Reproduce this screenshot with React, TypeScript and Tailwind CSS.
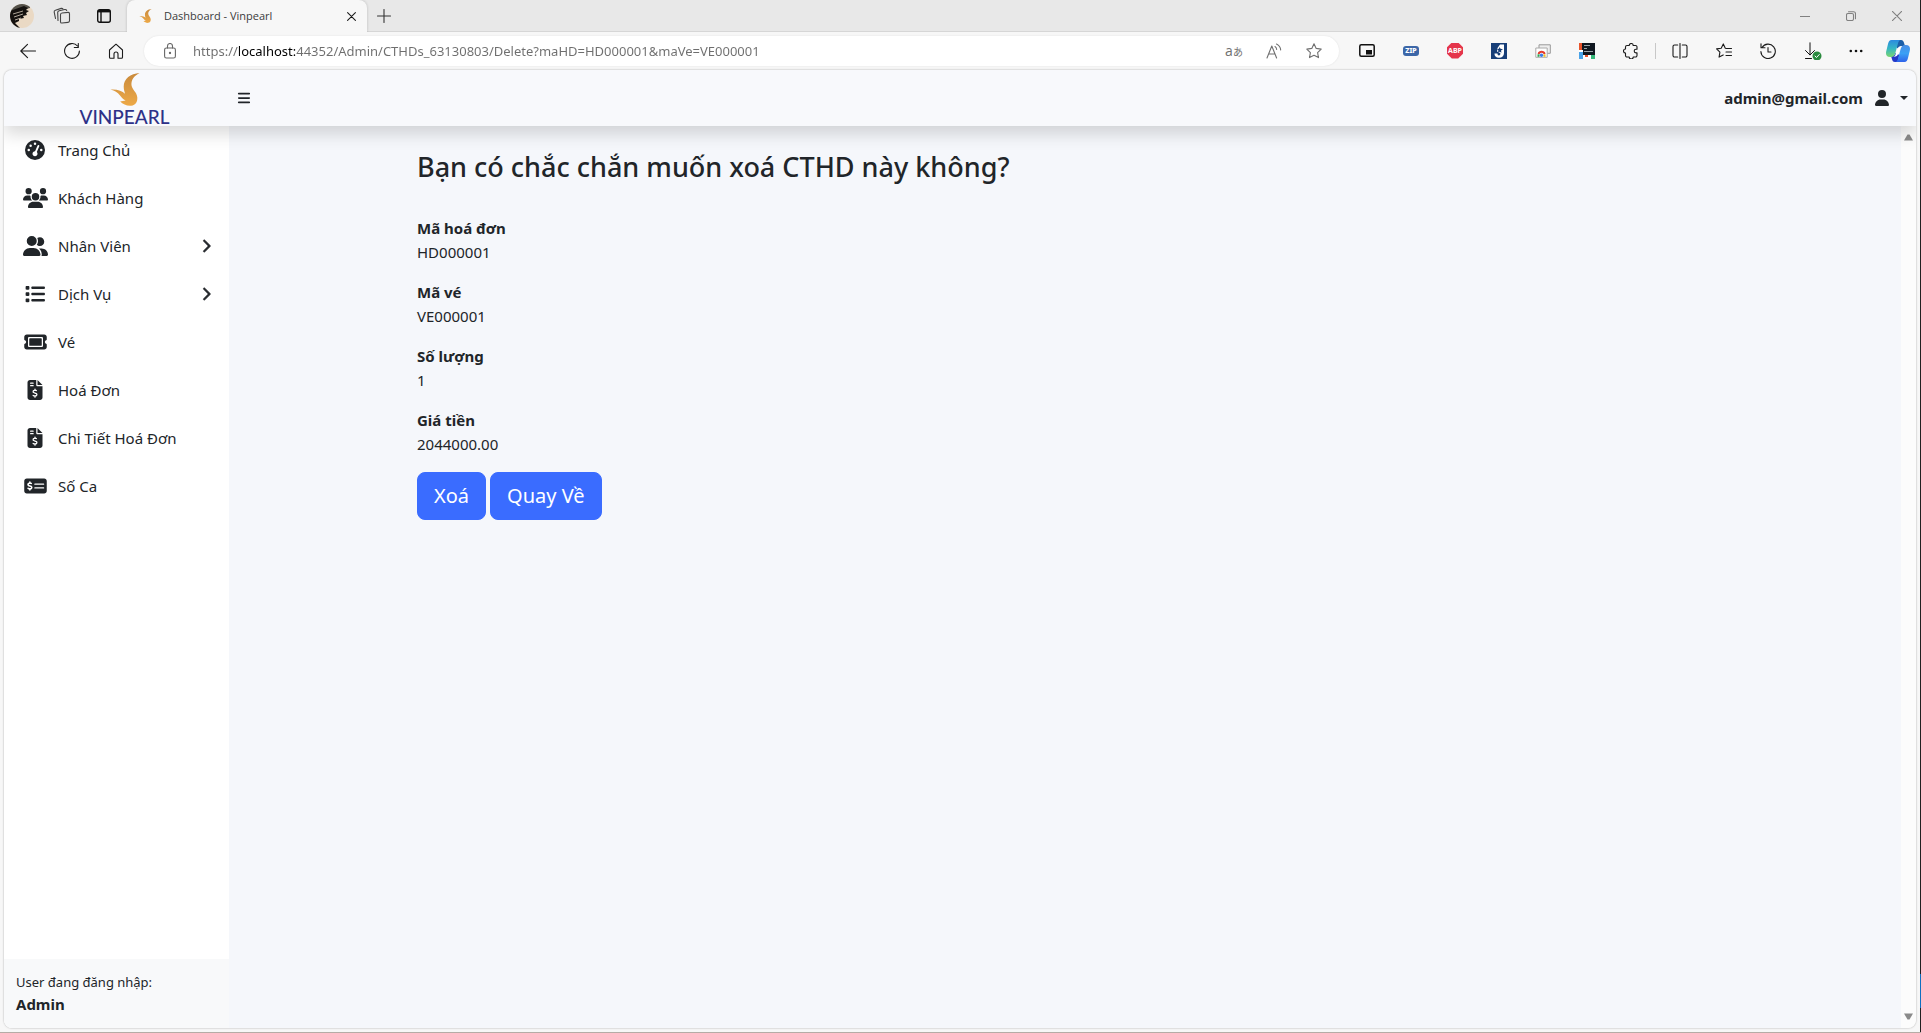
import React from "react";
import {
  FaBars,
  FaChevronRight,
  FaFileInvoiceDollar,
  FaGaugeHigh,
  FaList,
  FaMoneyCheckDollar,
  FaTicket,
  FaUser,
  FaUserGroup,
  FaUsers,
} from "react-icons/fa6";

type SvgProps = { children: React.ReactNode; box?: string; className?: string };

function Line({ children, box = "0 0 20 20", className = "size-5" }: SvgProps) {
  return (
    <svg
      viewBox={box}
      className={className}
      fill="none"
      stroke="currentColor"
      strokeWidth="1.1"
      strokeLinecap="round"
      strokeLinejoin="round"
      aria-hidden="true"
    >
      {children}
    </svg>
  );
}

function Bird({ className }: { className: string }) {
  return (
    <svg viewBox="0 0 90 102" className={className} aria-hidden="true">
      <defs>
        <linearGradient id="gold" x1="0" y1="0" x2="0" y2="1">
          <stop offset="0" stopColor="#c98a3c" />
          <stop offset="1" stopColor="#eda947" />
        </linearGradient>
      </defs>
      <path
        fill="url(#gold)"
        d="M90 0C62 2 41 18 41 42c0 9 2 14 4 22C36 55 20 49 0 51c14 4 22 9 29 18 5 7 10 12 18 16l-17 3c9 9 20 14 34 13 14-1 20-12 19-26-1-16-17-24-18-38C64 22 72 9 90 0Z"
      />
    </svg>
  );
}

function Avatar() {
  return (
    <svg viewBox="0 0 24 24" className="size-6" aria-hidden="true">
      <defs>
        <clipPath id="round">
          <circle cx="12" cy="12" r="12" />
        </clipPath>
      </defs>
      <g clipPath="url(#round)">
        <path fill="#ead9c4" d="M0 0h24v24H0z" />
        <path fill="#55524a" d="M0 0h20v4L8 7 0 9z" />
        <path fill="#14110f" d="M0 7 14 2l4 2-2 2 3 1-3 2 1 2-4 1 1 2-5 1v2l-4 2 6 6H0z" />
        <path stroke="#d8cdbd" strokeWidth=".8" d="m3 10 10-3M4 13l9-3M5 16l6-2" />
      </g>
    </svg>
  );
}

function IconButton({ label, children, wide = "w-11" }: { label: string; children: React.ReactNode; wide?: string }) {
  return (
    <button type="button" aria-label={label} title={label} className={`${wide} flex h-8 shrink-0 items-center justify-center`}>
      {children}
    </button>
  );
}

function TitleBar() {
  return (
    <div className="flex h-8 shrink-0 items-stretch border-b border-[#d6d6d6] bg-[#e8e8e8] text-[#1b1b1b]">
      <div className="flex w-[127px] shrink-0 items-center pl-[2px]">
        <IconButton label="Profile" wide="w-10">
          <Avatar />
        </IconButton>
        <IconButton label="Workspaces" wide="w-10">
          <Line className="size-[18px] text-[#444]" box="0 0 18 18">
            <rect x="7.5" y="5.5" width="9" height="10" rx="1.5" transform="skewY(-6) translate(0 1.5)" />
            <path d="M5 13.500 4.700 5.500c0-1 .6-1.600 1.500-1.800l5.500-1.200c1-.2 1.700.2 2 1" />
            <path d="M2.500 11.500 1.200 5.200C1 4.200 1.500 3.400 2.400 3.200L8.200 1.400c.9-.2 1.400 0 1.800.7" />
          </Line>
        </IconButton>
        <IconButton label="Tab actions" wide="w-11">
          <svg viewBox="0 0 14 14" className="size-[14px]" fill="none" stroke="#111" strokeWidth="1.4" aria-hidden="true">
            <rect x=".7" y=".7" width="12.600" height="12.600" rx="2" />
            <path strokeWidth="2.400" d="M1 2.200h12" />
            <path d="M4 3v10" />
          </svg>
        </IconButton>
      </div>
      <div className="-mb-px flex w-[240px] items-center rounded-t-lg bg-[#f7f7f7] pr-1 pl-3 shadow-[0_0_3px_rgba(0,0,0,0.2)] [clip-path:inset(0_-4px_0_-4px)]">
        <Bird className="h-[14px] w-[13px]" />
        <span className="ml-[12px] flex-1 font-['Open_Sans','Noto_Sans',sans-serif] text-[11px] text-[#3c3c3c]">Dashboard - Vinpearl</span>
        <IconButton label="Close tab" wide="w-6">
          <Line className="size-[9px]" box="0 0 9 9">
            <path d="m.6.6 7.800 7.800M8.400.6.6 8.400" />
          </Line>
        </IconButton>
      </div>
      <IconButton label="New tab" wide="w-[34px]">
        <Line className="size-[14px] text-[#333]" box="0 0 14 14">
          <path d="M7 .5v13M.5 7h13" />
        </Line>
      </IconButton>
      <div className="ml-auto flex text-[#808080]">
        <IconButton label="Minimize" wide="w-[46px]">
          <Line className="size-[10px]" box="0 0 10 10">
            <path d="M0 5.500h10" />
          </Line>
        </IconButton>
        <IconButton label="Restore" wide="w-[46px]">
          <Line className="size-[10px]" box="0 0 10 10">
            <rect x=".5" y="2.500" width="7" height="7" rx="1.500" />
            <path d="M2.500.7h5A2 2 0 0 1 9.500 2.700v5" />
          </Line>
        </IconButton>
        <IconButton label="Close window" wide="w-[46px]">
          <Line className="size-[10px]" box="0 0 10 10">
            <path d="m.3.3 9.400 9.400M9.700.3.3 9.700" />
          </Line>
        </IconButton>
      </div>
    </div>
  );
}

function AddressBar() {
  return (
    <form className="mx-[6px] flex h-[30px] flex-1 items-center rounded-full bg-white pl-[14px] shadow-[0_0_2px_rgba(0,0,0,0.1)]">
      <IconButton label="Site information" wide="w-6">
        <Line className="h-4 w-3 text-[#666]" box="0 0 12 16">
          <rect x=".6" y="5" width="10.800" height="10" rx="1.800" />
          <path d="M3.500 5V3a2.500 2.500 0 0 1 5 0v2" />
          <circle cx="6" cy="10" r=".6" fill="currentColor" />
        </Line>
      </IconButton>
      <input
        aria-label="Address"
        defaultValue="https://localhost:44352/Admin/CTHDs_63130803/Delete?maHD=HD000001&maVe=VE000001"
        className="ml-[11px] h-6 min-w-0 flex-1 bg-[linear-gradient(90deg,#6e6e6e_46px,#000_46px,#000_102px,#6e6e6e_102px)] bg-clip-text text-[13px] text-transparent outline-none"
      />
      <div className="mr-[5px] flex text-[#707070]">
        <IconButton label="Translate" wide="w-10">
          <span className="font-['Open_Sans','Noto_Sans_CJK_JP',sans-serif] text-[14px] leading-none whitespace-nowrap">
            a<span className="text-[10px]">あ</span>
          </span>
        </IconButton>
        <IconButton label="Read aloud" wide="w-10">
          <Line className="size-4" box="0 0 16 16">
            <path d="M1 15 5.800 3 10.600 15M2.700 11h6.200M9 3.500c1 .6 1.600 1.600 1.700 3M10.500 1c2.400 1.200 4 3.200 4.200 6" />
          </Line>
        </IconButton>
        <IconButton label="Add to favorites" wide="w-10">
          <Line className="size-4" box="0 0 16 16">
            <path d="m8 .8 2.200 4.600 5 .7-3.600 3.500.9 5L8 12.200l-4.500 2.400.9-5L.8 6.100l5-.7Z" />
          </Line>
        </IconButton>
      </div>
    </form>
  );
}

function Toolbar() {
  return (
    <div className="flex h-[37px] shrink-0 items-center bg-[#f7f7f7] pl-[6px] text-[#1b1b1b]">
      <IconButton label="Back">
        <Line className="size-4" box="0 0 16 16">
          <path d="M15.500 8H.8M7.500 1.300.8 8l6.700 6.700" />
        </Line>
      </IconButton>
      <IconButton label="Refresh">
        <Line className="size-4" box="0 0 16 16">
          <path d="M15.400 8A7.400 7.400 0 1 1 13.500 3M14.300.5v4h-4" />
        </Line>
      </IconButton>
      <IconButton label="Home">
        <Line className="size-4" box="0 0 16 16">
          <path d="M1.500 7 8 1.200 14.500 7v7.200a1 1 0 0 1-1 1H10V11a2 2 0 0 0-4 0v4.200H2.500a1 1 0 0 1-1-1Z" />
        </Line>
      </IconButton>
      <AddressBar />
      <IconButton label="Picture in picture">
        <svg viewBox="0 0 16 13" className="h-[13px] w-4" aria-hidden="true">
          <rect x=".8" y=".8" width="14.400" height="11.400" rx="1.500" fill="none" stroke="#111" strokeWidth="1.500" />
          <path d="M7 6h6v4.500H7z" fill="#111" />
        </svg>
      </IconButton>
      <IconButton label="Zip extension">
        <span className="flex h-[10px] w-4 items-center justify-center rounded-[3px] bg-[#3c67a8] text-[7px] leading-none font-extrabold text-white">
          ZIP
        </span>
      </IconButton>
      <IconButton label="Ad blocker">
        <span className="flex size-4 items-center justify-center bg-[#e5354b] text-[7px] leading-none font-bold text-white [clip-path:polygon(30%_0,70%_0,100%_30%,100%_70%,70%_100%,30%_100%,0_70%,0_30%)]">
          ABP
        </span>
      </IconButton>
      <IconButton label="J extension">
        <svg viewBox="0 0 16 16" className="size-4" aria-hidden="true">
          <path fill="#173e78" d="M0 0h16v16H0z" />
          <path fill="#fff" d="M9 1.500h4V10c0 3-2 4.800-5 4.800S3.300 13 3.500 10.500h3c0 1.300.5 1.900 1.400 1.900 1 0 1.500-.6 1.500-1.800L9 10 6 8.500 6.500 5z" />
          <path fill="#173e78" d="m8.500 4 1 1.800 2.500.4-2 1.400.5 2.200-1.800-1-1.700.7.4-2L6 6l2-.2z" />
        </svg>
      </IconButton>
      <IconButton label="Screenshot extension">
        <svg viewBox="0 0 16 14" className="h-[14px] w-4" fill="none" aria-hidden="true">
          <path fill="#eee" stroke="#999" d="M4 .8h11.300v8.500H4z" />
          <path fill="#fff" stroke="#aaa" d="M.8 4h11.400v9.300H.8z" />
          <path stroke="#e33b2e" strokeWidth="2" d="M3.500 10a3.300 3.300 0 0 1 6.200 0" />
          <path stroke="#2fa84f" strokeWidth="2" d="M3.500 10.300v2.500" />
          <path stroke="#f6bd18" strokeWidth="2" d="M9.500 10.300v2.500" />
          <circle cx="6.500" cy="11.200" r="1.700" fill="#3d7ce8" />
        </svg>
      </IconButton>
      <IconButton label="Web extension">
        <svg viewBox="0 0 16 16" className="size-4" aria-hidden="true">
          <path fill="#101820" d="M0 0h16v16H0z" />
          <path fill="#e8532b" d="M0 0h3v8H0z" />
          <path fill="#fff" d="M0 7h4v2H0zM4 12h8v4H4z" />
          <path fill="#4aa3e8" d="M0 9h4v7H0z" />
          <path fill="#35b779" d="M12 12h4v4h-4z" />
          <path stroke="#9aa3a8" d="M5 2.500h6M5 5.500h3M5 8.500h9" />
          <path fill="#e8532b" d="M6 12h3v2H6z" />
        </svg>
      </IconButton>
      <IconButton label="Extensions">
        <Line className="size-4" box="0 0 16 16">
          <path d="M4 2.500h2.200a2 2 0 0 1 4 0h2.300a1.500 1.500 0 0 1 1.500 1.500v2.300h-1a1.800 1.800 0 0 0 0 3.600h1v2.600a1.500 1.500 0 0 1-1.500 1.500h-2.300a2 2 0 0 1-4 0H4A1.500 1.500 0 0 1 2.500 12.500V10a2 2 0 0 1 0-4V4A1.500 1.500 0 0 1 4 2.500Z" />
        </Line>
      </IconButton>
      <div className="mx-[2px] h-4 w-px bg-[#c8c8c8]" />
      <IconButton label="Split screen">
        <Line className="size-4" box="0 0 16 16">
          <path d="M8 .5v15M5.700 2H2.500A1.500 1.500 0 0 0 1 3.500v9A1.500 1.500 0 0 0 2.500 14h3.200M10.300 2h3.200A1.500 1.500 0 0 1 15 3.500v9a1.500 1.500 0 0 1-1.500 1.500h-3.200" />
        </Line>
      </IconButton>
      <IconButton label="Favorites">
        <Line className="size-4" box="0 0 16 16">
          <path d="M10.500 5.500 9.300 5.200 7.300.9 5.200 5.200.6 5.900l3.300 3.300-.8 4.900 4.100-2.200M11 5.500h4.500M10 9h5.500M10 12.500h5.500" />
        </Line>
      </IconButton>
      <IconButton label="History">
        <Line className="size-4" box="0 0 16 16">
          <path d="M2 4.500A7.200 7.200 0 1 1 .9 8.500M1 .8v4h4M8 4.500V9h3" />
        </Line>
      </IconButton>
      <IconButton label="Downloads" wide="w-[46px]">
        <svg viewBox="0 0 18 18" className="size-[18px]" fill="none" stroke="#111" strokeLinecap="round" aria-hidden="true">
          <path d="M6 .8v12M1.500 8.500 6 13l4.500-4.500M1.500 16.500h6" />
          <circle cx="13" cy="14" r="4.500" fill="#2a8a3e" stroke="none" />
          <path stroke="#fff" d="m11 14 1.500 1.500 2.800-3" />
        </svg>
      </IconButton>
      <IconButton label="Settings and more" wide="w-10">
        <svg viewBox="0 0 14 4" className="h-1 w-[14px]" fill="#111" aria-hidden="true">
          <circle cx="1.800" cy="2" r="1.300" />
          <circle cx="7" cy="2" r="1.300" />
          <circle cx="12.200" cy="2" r="1.300" />
        </svg>
      </IconButton>
      <IconButton label="Copilot" wide="w-11">
        <svg viewBox="0 0 24 22" className="h-[22px] w-6" aria-hidden="true">
          <defs>
            <linearGradient id="cpLeft" x1="0" y1="0" x2="0" y2="1">
              <stop offset="0" stopColor="#2b8be0" />
              <stop offset=".5" stopColor="#35b6c4" />
              <stop offset="1" stopColor="#7ad66f" />
            </linearGradient>
            <linearGradient id="cpRight" x1="0" y1="1" x2="0" y2="0">
              <stop offset="0" stopColor="#2f63ea" />
              <stop offset=".5" stopColor="#3aa0f5" />
              <stop offset="1" stopColor="#4a8fe6" />
            </linearGradient>
          </defs>
          <path fill="#1c5fa8" d="M10 0h5c2 0 2.600 1.500 3.200 3.500L19 6h-3c-2 0-2.600 1-3.500 3L9 6z" />
          <path fill="#2338c8" d="M5 16c3 0 3.600-1 4.500-3l4 2-2 7H9c-2 0-2.600-1-3.200-3.500z" />
          <path fill="url(#cpLeft)" d="M5.500 0H15c-2 0-2.600 2-3.200 4L9.500 12.500C8.800 15 7.500 17 5 17H4c-3.500 0-4.600-2.500-3.700-6L2 4C2.700 1.500 3.500 0 5.500 0Z" />
          <path fill="url(#cpRight)" d="M18.500 22H9c2 0 2.600-2 3.200-4l2.300-8.500C15.200 7 16.500 5 19 5h1c3.500 0 4.600 2.500 3.700 6L22 18c-.7 2.500-1.500 4-3.500 4Z" />
          <path fill="#fff" d="M16 6c-2.500 0-4 1-4.600 3L9.500 14.500C9 16 8.500 16.500 7 16.700c3 .3 4.500-.7 5.200-3l1.600-5c.5-1.500 1-2.300 2.200-2.700z" />
        </svg>
      </IconButton>
    </div>
  );
}

function SiteHeader() {
  return (
    <header className="z-10 flex h-14 shrink-0 items-center bg-[#f8f9fc] shadow-[0_8px_16px_rgba(0,0,0,0.15)]">
      <a href="#home" className="flex w-[225px] flex-col items-center pt-[3px] pl-4">
        <Bird className="h-[33px] w-[30px]" />
        <span className="mt-[2px] font-['Lato','Open_Sans',sans-serif] text-[19px] leading-[18px] font-medium text-[#2e3188]">
          VINPEARL
        </span>
      </a>
      <button type="button" aria-label="Toggle menu" className="flex w-[30px] justify-center text-[14px]">
        <FaBars />
      </button>
      <button type="button" className="ml-auto flex items-center pr-2 text-[15px] leading-6 font-bold">
        admin@gmail.com
        <FaUser className="mr-[10px] ml-[11px] size-4" />
        <svg viewBox="0 0 8 4" className="h-1 w-2" fill="currentColor" aria-hidden="true">
          <path d="M0 0h8L4 4z" />
        </svg>
      </button>
    </header>
  );
}

const menu = [
  { text: "Trang Chủ", icon: FaGaugeHigh, size: "h-5 w-5" },
  { text: "Khách Hàng", icon: FaUsers, size: "h-5 w-[25px]" },
  { text: "Nhân Viên", icon: FaUserGroup, size: "h-5 w-[25px]", open: true },
  { text: "Dịch Vụ", icon: FaList, size: "h-5 w-5", open: true },
  { text: "Vé", icon: FaTicket, size: "h-5 w-[23px]" },
  { text: "Hoá Đơn", icon: FaFileInvoiceDollar, size: "h-5 w-5" },
  { text: "Chi Tiết Hoá Đơn", icon: FaFileInvoiceDollar, size: "h-5 w-5" },
  { text: "Số Ca", icon: FaMoneyCheckDollar, size: "h-5 w-[23px]" },
];

function Sidebar() {
  return (
    <aside className="flex w-[225px] shrink-0 flex-col bg-white">
      <nav className="flex-1">
        {menu.map(({ text, icon: Icon, size, open }) => (
          <a key={text} href="#menu" className="flex h-12 items-center px-4 text-[15px]">
            <span className="flex w-[30px] justify-center">
              <Icon className={size} />
            </span>
            <span className="ml-2">{text}</span>
            {open && <FaChevronRight className="ml-auto size-[14px] stroke-current stroke-[24]" />}
          </a>
        ))}
      </nav>
      <footer className="bg-[#f8f9fa] px-3 py-3">
        <div className="text-[13px] leading-[22px]">User đang đăng nhập:</div>
        <div className="text-[15px] leading-[23px] font-bold">Admin</div>
      </footer>
    </aside>
  );
}

const fields = [
  ["Mã hoá đơn", "HD000001"],
  ["Mã vé", "VE000001"],
  ["Số lượng", "1"],
  ["Giá tiền", "2044000.00"],
];

function DeletePage() {
  return (
    <main className="flex-1 bg-[#f5f7fb]">
      <div className="mx-auto max-w-[1320px] px-3 pt-6">
        <h1 className="text-[27px] leading-[34px] font-medium">Bạn có chắc chắn muốn xoá CTHD này không?</h1>
        <dl className="mt-8 text-[15px] leading-6">
          {fields.map(([name, value]) => (
            <div key={name} className="mb-4">
              <dt className="font-bold">{name}</dt>
              <dd>{value}</dd>
            </div>
          ))}
        </dl>
        <form className="flex gap-1">
          <button type="button" className="h-12 rounded-lg border border-[#3a6cff] bg-[#3a6cff] px-4 text-[20px] text-white">
            Xoá
          </button>
          <button type="button" className="h-12 rounded-lg border border-[#3a6cff] bg-[#3a6cff] px-4 text-[20px] text-white">
            Quay Về
          </button>
        </form>
      </div>
    </main>
  );
}

function ScrollTrack() {
  return (
    <div className="flex w-[15px] shrink-0 flex-col items-center justify-between bg-[#fcfcfc] py-2 text-[#8a8a8a]">
      <svg viewBox="0 0 9 7" className="h-[7px] w-[9px]" fill="currentColor" aria-hidden="true">
        <path d="M3.500.5h2L9 6.500H0z" />
      </svg>
      <svg viewBox="0 0 9 7" className="h-[7px] w-[9px]" fill="currentColor" aria-hidden="true">
        <path d="M3.500 6.500h2L9 .5H0z" />
      </svg>
    </div>
  );
}

export default function App() {
  return (
    <div className="flex h-screen flex-col overflow-hidden bg-[#f7f7f7] font-['Noto_Sans','Open_Sans',sans-serif] text-[#212529]">
      <div className="flex min-h-0 flex-1">
        <div className="flex min-w-0 flex-1 flex-col">
          <TitleBar />
          <Toolbar />
          <div className="mx-1 mt-px mb-1 flex min-h-0 flex-1 flex-col overflow-hidden rounded-lg shadow-[0_0_2px_rgba(0,0,0,0.35)]">
            <SiteHeader />
            <div className="flex min-h-0 flex-1">
              <Sidebar />
              <DeletePage />
              <ScrollTrack />
            </div>
          </div>
        </div>
        <div className="flex w-px flex-col bg-[#202020]">
          <div className="mt-auto mb-6 h-[34px] bg-[#0f6fc0]" />
        </div>
      </div>
      <div className="h-px bg-[#b5aca6]" />
    </div>
  );
}
